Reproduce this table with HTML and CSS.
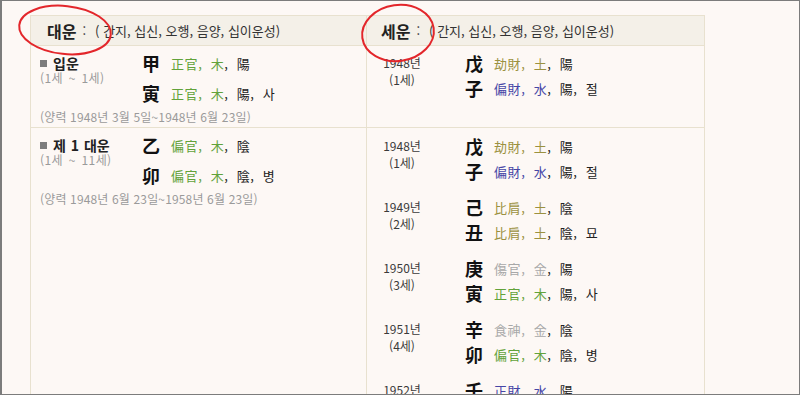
FILE: index.html
```html
<!DOCTYPE html>
<html lang="ko">
<head>
<meta charset="utf-8">
<title>대운 · 세운</title>
<link rel="stylesheet" href="styles.css">
</head>
<body>
<div class="frame">
  <div class="saju">
    <div class="hd hd-l"><b class="ttl">대운</b><span class="colon">:</span>( 간지, 십신, 오행, 음양, 십이운성)</div>
    <div class="hd hd-r"><b class="ttl">세운</b><span class="colon">:</span>( 간지, 십신, 오행, 음양, 십이운성)</div>

    <div class="cell dl">
      <div class="dtop">
        <div class="dlabel">
          <div class="dname"><span class="sq"></span>입운</div>
          <div class="dage">(1세 ~ 1세)</div>
        </div>
        <div class="gz">
          <div class="gzl"><span class="hj">甲</span><span class="c-wood">正官, 木</span>, 陽</div>
          <div class="gzl"><span class="hj">寅</span><span class="c-wood">正官, 木</span>, 陽, 사</div>
        </div>
      </div>
      <div class="ddate">(양력 1948년 3월 5일~1948년 6월 23일)</div>
    </div>
    <div class="cell sr">
      <div class="yb">
        <div class="ycol"><div class="yr">1948년</div><div class="age">(1세)</div></div>
        <div class="gz gz-s">
          <div class="gzl"><span class="hj">戊</span><span class="c-earth">劫財, 土</span>, 陽</div>
          <div class="gzl"><span class="hj">子</span><span class="c-water">偏財, 水</span>, 陽, 절</div>
        </div>
      </div>
    </div>

    <div class="cell dl">
      <div class="dtop">
        <div class="dlabel">
          <div class="dname"><span class="sq"></span>제 1 대운</div>
          <div class="dage">(1세 ~ 11세)</div>
        </div>
        <div class="gz">
          <div class="gzl"><span class="hj">乙</span><span class="c-wood">偏官, 木</span>, 陰</div>
          <div class="gzl"><span class="hj">卯</span><span class="c-wood">偏官, 木</span>, 陰, 병</div>
        </div>
      </div>
      <div class="ddate">(양력 1948년 6월 23일~1958년 6월 23일)</div>
    </div>
    <div class="cell sr sr2">
      <div class="yb">
        <div class="ycol"><div class="yr">1948년</div><div class="age">(1세)</div></div>
        <div class="gz gz-s">
          <div class="gzl"><span class="hj">戊</span><span class="c-earth">劫財, 土</span>, 陽</div>
          <div class="gzl"><span class="hj">子</span><span class="c-water">偏財, 水</span>, 陽, 절</div>
        </div>
      </div>
      <div class="yb">
        <div class="ycol"><div class="yr">1949년</div><div class="age">(2세)</div></div>
        <div class="gz gz-s">
          <div class="gzl"><span class="hj">己</span><span class="c-earth">比肩, 土</span>, 陰</div>
          <div class="gzl"><span class="hj">丑</span><span class="c-earth">比肩, 土</span>, 陰, 묘</div>
        </div>
      </div>
      <div class="yb">
        <div class="ycol"><div class="yr">1950년</div><div class="age">(3세)</div></div>
        <div class="gz gz-s">
          <div class="gzl"><span class="hj">庚</span><span class="c-metal">傷官, 金</span>, 陽</div>
          <div class="gzl"><span class="hj">寅</span><span class="c-wood">正官, 木</span>, 陽, 사</div>
        </div>
      </div>
      <div class="yb">
        <div class="ycol"><div class="yr">1951년</div><div class="age">(4세)</div></div>
        <div class="gz gz-s">
          <div class="gzl"><span class="hj">辛</span><span class="c-metal">食神, 金</span>, 陰</div>
          <div class="gzl"><span class="hj">卯</span><span class="c-wood">偏官, 木</span>, 陰, 병</div>
        </div>
      </div>
      <div class="yb">
        <div class="ycol"><div class="yr">1952년</div><div class="age">(5세)</div></div>
        <div class="gz gz-s">
          <div class="gzl"><span class="hj">壬</span><span class="c-water">正財, 水</span>, 陽</div>
          <div class="gzl"><span class="hj">辰</span><span class="c-earth">偏官, 土</span>, 陽, 관대</div>
        </div>
      </div>
    </div>
  </div>

  <svg class="marks" width="800" height="395" viewBox="0 0 800 395" aria-hidden="true">
    <ellipse cx="65" cy="30" rx="46" ry="24" transform="rotate(6 65 30)" fill="none" stroke="#e3262b" stroke-width="2"/>
    <ellipse cx="398" cy="33" rx="36" ry="28" transform="rotate(-8 398 33)" fill="none" stroke="#e3262b" stroke-width="2"/>
  </svg>
</div>
</body>
</html>
```

FILE: styles.css
```css
* { box-sizing: border-box; }
html, body {
  margin: 0;
  padding: 0;
  background: #fdf8f5;
}
body {
  font-family: "Noto Sans CJK KR", "Noto Sans", sans-serif;
  color: #222;
}
.frame {
  position: relative;
  width: 800px;
  height: 395px;
  overflow: hidden;
  background: #fdf8f5;
  border: 1px solid #7c7c7c;
  border-left-width: 2px;
  padding: 14px 0 0 28px;
}
.saju {
  display: grid;
  grid-template-columns: 336px 338px;
  width: 675px;
  border-top: 1px solid #e8e1cf;
  border-left: 1px solid #e8e1cf;
}
.hd, .cell {
  border-right: 1px solid #e8e1cf;
  border-bottom: 1px solid #e8e1cf;
}
.hd {
  height: 30px;
  background: #f4f0e8;
  display: flex;
  align-items: center;
  font-size: 13px;
  color: #333;
  white-space: pre;
}
.hd-l { padding-left: 16px; }
.hd-r { padding-left: 14px; }
.ttl {
  font-size: 16px;
  font-weight: 700;
  color: #222;
}
.colon {
  margin: 0 9px 0 6px;
}
.cell {
  background: #fdf8f5;
  padding: 8px 0 2px;
}
.dl { padding-left: 9px; }
.sr { padding-left: 15px; }
.sr2 { padding-top: 9px; }

.dtop { display: flex; }
.dlabel { width: 102px; }
.dname {
  display: flex;
  align-items: center;
  height: 16px;
  margin-top: 1px;
  font-size: 14px;
  font-weight: 700;
  color: #222;
  white-space: pre;
  word-spacing: 1px;
}
.sq {
  width: 7px;
  height: 7px;
  background: #7d7d7d;
  margin-right: 6px;
}
.dage {
  font-size: 12px;
  line-height: 14px;
  color: #9a9a9a;
  letter-spacing: 0.4px;
  word-spacing: 2px;
  white-space: pre;
}
.ddate {
  margin-top: 7px;
  font-size: 12px;
  line-height: 16px;
  color: #9a9a9a;
  letter-spacing: 0.15px;
  white-space: pre;
}

.gz {
  display: flex;
  flex-direction: column;
  gap: 12px;
}
.gz-s { gap: 7px; }
.gzl {
  display: flex;
  align-items: center;
  height: 18px;
  font-size: 13px;
  letter-spacing: 0.6px;
  word-spacing: 4px;
  color: #222;
  white-space: pre;
}
.hj {
  font-size: 18px;
  font-weight: 700;
  color: #111;
  width: 29px;
  letter-spacing: 0;
}
.c-wood { color: #62a23a; }
.c-earth { color: #9b9140; }
.c-water { color: #4646a6; }
.c-metal { color: #a8a8a8; }

.yb {
  display: flex;
  margin-bottom: 18px;
}
.ycol {
  width: 40px;
  margin-right: 43px;
  text-align: center;
  color: #3a3a3a;
  font-size: 12px;
}
.yr { line-height: 18px; }
.age { line-height: 14px; margin-top: 1px; }

.marks {
  position: absolute;
  left: -2px;
  top: -1px;
  pointer-events: none;
}
```
